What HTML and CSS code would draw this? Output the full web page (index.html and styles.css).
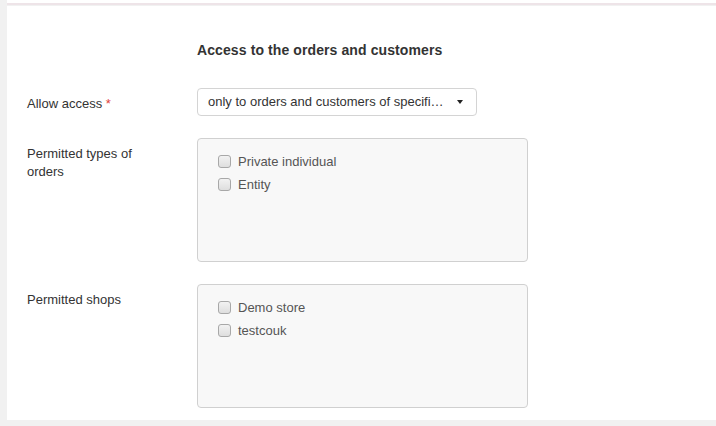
FILE: index.html
```html
<!DOCTYPE html>
<html>
<head>
<meta charset="utf-8">
<link rel="stylesheet" href="styles.css">
</head>
<body>
<div class="topcard"></div>
<div class="card">
  <div class="row heading-row">
    <div class="label"></div>
    <h3 class="heading">Access to the orders and customers</h3>
  </div>
  <div class="row">
    <div class="label">Allow access <span class="req">*</span></div>
    <div class="select">
      <span class="select-text">only to orders and customers of specifi…</span>
      <span class="caret"></span>
    </div>
  </div>
  <div class="row">
    <div class="label">Permitted types of orders</div>
    <div class="checkbox-box">
      <label class="check"><input type="checkbox"><span>Private individual</span></label>
      <label class="check"><input type="checkbox"><span>Entity</span></label>
    </div>
  </div>
  <div class="row">
    <div class="label">Permitted shops</div>
    <div class="checkbox-box">
      <label class="check"><input type="checkbox"><span>Demo store</span></label>
      <label class="check"><input type="checkbox"><span>testcouk</span></label>
    </div>
  </div>
</div>
</body>
</html>
```

FILE: styles.css
```css
html, body {
  margin: 0;
  padding: 0;
}
body {
  background: #f1f1f1;
  font-family: "Liberation Sans", Arial, sans-serif;
  font-size: 13px;
  line-height: 18px;
  color: #333;
  height: 426px;
  overflow: hidden;
}
.topcard {
  margin-left: 7px;
  height: 3px;
  background: #fff;
  border-bottom: 2px solid #eee4e8;
}
.card {
  margin: 1px 0 0 7px;
  background: #fff;
  padding: 35px 0 0 20px;
  height: 379px;
  display: flex;
  flex-direction: column;
  gap: 22px;
}
.row {
  display: flex;
  align-items: flex-start;
}
.heading-row {
  margin-bottom: 7px;
}
.label {
  width: 170px;
  flex: none;
  padding-top: 7px;
  padding-right: 30px;
  box-sizing: border-box;
}
.heading-row .label {
  padding-top: 0;
}
.heading {
  margin: 0;
  font-size: 14px;
  font-weight: bold;
  line-height: 18px;
  letter-spacing: 0.1px;
  color: #333;
}
.req {
  color: #e0413b;
}
.select {
  width: 280px;
  height: 28px;
  box-sizing: border-box;
  border: 1px solid #d4d4d4;
  border-radius: 4px;
  background: #fff;
  display: flex;
  align-items: center;
  justify-content: space-between;
  padding: 0 10px 0 10px;
}
.select-text {
  white-space: nowrap;
  color: #333;
}
.caret {
  width: 0;
  height: 0;
  border-left: 3px solid transparent;
  border-right: 3px solid transparent;
  border-top: 4px solid #222;
  margin-right: 3px;
}
.checkbox-box {
  width: 331px;
  height: 124px;
  box-sizing: border-box;
  border: 1px solid #d0d0d0;
  border-radius: 4px;
  background: #f8f8f8;
  padding: 11px 20px;
  display: flex;
  flex-direction: column;
}
.check {
  display: flex;
  align-items: center;
  height: 23px;
  color: #555;
}
.check input {
  -webkit-appearance: none;
  appearance: none;
  width: 13px;
  height: 13px;
  margin: 0 7px 0 0;
  border: 1px solid #a8a8a8;
  border-radius: 3px;
  background: linear-gradient(#f2f2f2, #dedede);
  box-sizing: border-box;
}
```
